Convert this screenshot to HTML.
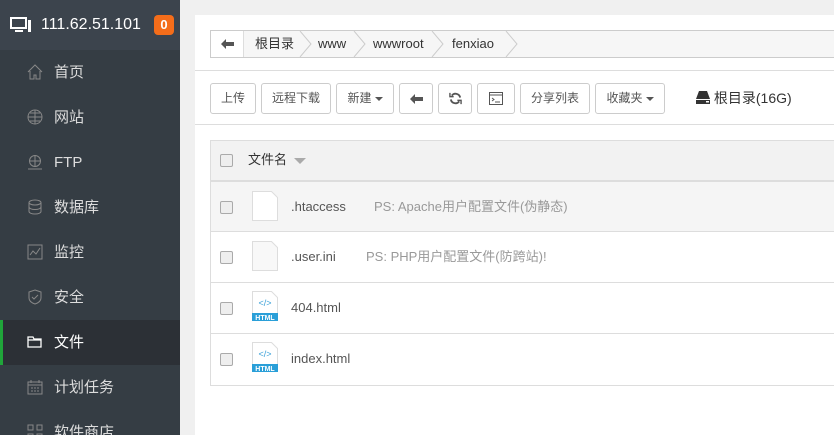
<!DOCTYPE html>
<html><head><meta charset="utf-8"><style>
*{margin:0;padding:0;box-sizing:border-box}
html,body{width:834px;height:435px;overflow:hidden}
body{background:#f0f0f0;font-family:"Liberation Sans","Noto Sans CJK SC",sans-serif;position:relative}
.sb{position:absolute;left:0;top:0;width:180px;height:435px;background:#353d44}
.hd{height:50px;background:#3c444d;position:relative;color:#fff;font-size:16px}
.hd .ip{position:absolute;left:41px;top:0;line-height:50px}
.hd .bd{position:absolute;left:154px;top:15px;width:20px;height:20px;background:#f46d1a;border-radius:4px;font-size:13px;font-weight:bold;text-align:center;line-height:20px}
.it{height:45px;position:relative;color:#ddd;font-size:15px}
.it span{position:absolute;left:54px;top:0;line-height:45px}
.it svg{position:absolute;left:27px;top:14px}
.it.ac{background:#2c3036;color:#fff}
.it.ac:before{content:"";position:absolute;left:0;top:0;width:3px;height:45px;background:#20a53a}
.pn{position:absolute;left:195px;top:15px;width:639px;height:420px;background:#fff}
.bc{position:absolute;left:210px;top:30px;width:630px;height:28px;border:1px solid #ccc;background:#f6f6f6;font-size:13px;color:#333}
.bc .bk{position:absolute;left:0;top:0;width:33px;height:26px;background:#fff;border-right:1px solid #ddd}
.bc span{position:absolute;top:0;line-height:26px}
.ln{position:absolute;left:195px;width:639px;height:1px;background:#ddd}
.btn{position:absolute;top:83px;height:31px;border:1px solid #ccc;border-radius:3px;background:#fff;font-size:12px;color:#555;text-align:center;line-height:29px}
.car{display:inline-block;width:0;height:0;border-left:4px solid transparent;border-right:4px solid transparent;border-top:4px solid #555;vertical-align:middle;margin-left:3px}
.tb{position:absolute;left:210px;top:140px;width:630px;height:246px;border:1px solid #ddd}
.row{position:absolute;left:0;width:630px;border-bottom:1px solid #ddd;font-size:13px;color:#555}
.cb{position:absolute;left:9px;width:13px;height:13px;border:1px solid #aaa;border-radius:2px;background:#eee}
.fi{position:absolute;left:41px;width:26px;height:30px}
.nm{position:absolute;left:80px;top:0;line-height:50px}
.ps{position:absolute;color:#999;top:0;line-height:50px}
</style></head><body>
<div class="sb">
 <div class="hd">
  <svg style="position:absolute;left:10px;top:17px" width="22" height="16" viewBox="0 0 22 16"><rect x="1" y="1" width="15" height="10" fill="none" stroke="#fff" stroke-width="2"/><rect x="5" y="13" width="8" height="2" fill="#fff"/><rect x="18" y="3" width="3" height="12" fill="#fff"/></svg>
  <span class="ip">111.62.51.101</span><span class="bd">0</span>
 </div>
 <div class="it"><svg width="16" height="16" viewBox="0 0 16 16" fill="none" stroke="#888"><path d="M1 8L8 1l7 7M3 7v8h4v-4h2v4h4V7"/></svg><span>首页</span></div>
 <div class="it"><svg width="16" height="16" viewBox="0 0 16 16" fill="none" stroke="#888"><circle cx="8" cy="8" r="7"/><path d="M1 8h14M8 1v14M3 4h10M3 12h10"/></svg><span>网站</span></div>
 <div class="it"><svg width="16" height="16" viewBox="0 0 16 16" fill="none" stroke="#888"><circle cx="8" cy="7" r="5.5"/><path d="M3 7h10M8 2v10M1 15h14"/></svg><span>FTP</span></div>
 <div class="it"><svg width="16" height="16" viewBox="0 0 16 16" fill="none" stroke="#888"><ellipse cx="8" cy="3.5" rx="6" ry="2.5"/><path d="M2 3.5v9c0 1.4 2.7 2.5 6 2.5s6-1.1 6-2.5v-9M2 8c0 1.4 2.7 2.5 6 2.5s6-1.1 6-2.5"/></svg><span>数据库</span></div>
 <div class="it"><svg width="16" height="16" viewBox="0 0 16 16" fill="none" stroke="#888"><rect x="1" y="1" width="14" height="14"/><path d="M3 11l3-4 3 3 4-6"/></svg><span>监控</span></div>
 <div class="it"><svg width="16" height="16" viewBox="0 0 16 16" fill="none" stroke="#888"><path d="M8 1l6 2v6c0 3-3 5-6 6-3-1-6-3-6-6V3z"/><path d="M5 8l2 2 4-4"/></svg><span>安全</span></div>
 <div class="it ac"><svg width="16" height="16" viewBox="0 0 16 16" fill="none" stroke="#fff" stroke-width="1.3"><path d="M1 3h5l1 2h7v8H1z M1 6h13"/></svg><span>文件</span></div>
 <div class="it"><svg width="16" height="16" viewBox="0 0 16 16" fill="none" stroke="#888"><rect x="1" y="3" width="14" height="12"/><path d="M1 6h14M4 1v3M12 1v3M4 9h2M7 9h2M10 9h2M4 12h2M7 12h2M10 12h2"/></svg><span>计划任务</span></div>
 <div class="it"><svg width="16" height="16" viewBox="0 0 16 16" fill="none" stroke="#888"><rect x="1" y="1" width="5" height="5"/><rect x="10" y="1" width="5" height="5"/><rect x="1" y="10" width="5" height="5"/><rect x="10" y="10" width="5" height="5"/></svg><span>软件商店</span></div>
</div>
<div class="pn"></div>
<div class="bc">
 <div class="bk"><svg style="position:absolute;left:10px;top:8px" width="13" height="10" viewBox="0 0 13 10"><path d="M0 5L5 0v3h8v4H5v3z" fill="#555"/></svg></div>
 <svg style="position:absolute;left:0;top:0" width="330" height="26"><g fill="none" stroke="#ccc"><path d="M89 0l11 13-11 13M143 0l11 13-11 13M221 0l11 13-11 13M295 0l11 13-11 13"/></g></svg>
 <span style="left:44px">根目录</span><span style="left:107px">www</span><span style="left:162px">wwwroot</span><span style="left:241px">fenxiao</span>
</div>
<div class="ln" style="top:70px"></div>
<div class="btn" style="left:210px;width:46px">上传</div>
<div class="btn" style="left:261px;width:70px">远程下载</div>
<div class="btn" style="left:336px;width:58px">新建<span class="car"></span></div>
<div class="btn" style="left:399px;width:34px"><svg width="13" height="10" viewBox="0 0 13 10" style="vertical-align:middle"><path d="M0 5L5 0v3h8v4H5v3z" fill="#555"/></svg></div>
<div class="btn" style="left:438px;width:34px"><svg width="13" height="13" viewBox="0 0 14 14" style="vertical-align:middle" fill="none" stroke="#555" stroke-width="2"><path d="M12 6A5 5 0 0 0 3 4M2 8a5 5 0 0 0 9 2"/><path d="M1 1v4h4M13 13V9H9" stroke-width="1.5"/></svg></div>
<div class="btn" style="left:477px;width:38px"><svg width="14" height="13" viewBox="0 0 14 13" style="vertical-align:middle" fill="none" stroke="#555"><rect x="0.5" y="0.5" width="13" height="12"/><path d="M0.5 3h13M3 6l2 1.5L3 9M6 10h5"/></svg></div>
<div class="btn" style="left:520px;width:70px">分享列表</div>
<div class="btn" style="left:595px;width:70px">收藏夹<span class="car"></span></div>
<div style="position:absolute;left:696px;top:83px;line-height:31px;font-size:14px;color:#333"><svg width="14" height="13" viewBox="0 0 14 13" style="vertical-align:-1px"><path d="M3 0h8l3 8H0z" fill="#333"/><rect x="0" y="9" width="14" height="4" fill="#333"/><rect x="10" y="10" width="3" height="1.5" fill="#fff"/></svg> 根目录(16G)</div>
<div class="ln" style="top:124px"></div>
<div class="tb">
 <div class="row" style="top:0;height:40px;background:#f2f2f2"><div class="cb" style="top:13px"></div><span style="position:absolute;left:37px;top:0;line-height:38px;color:#333">文件名 <span class="car" style="border-top-color:#aaa;border-width:6px 6px 0"></span></span></div>
 <div class="row" style="top:40px;height:51px;background:#f5f5f5;border-top:1px solid #ddd"><div class="cb" style="top:19px"></div>
  <svg class="fi" style="top:9px" viewBox="0 0 26 30"><path d="M0.5 0.5h19l6 6v23H0.5z" fill="#fff" stroke="#ddd"/></svg>
  <span class="nm">.htaccess</span><span class="ps" style="left:163px">PS: Apache用户配置文件(伪静态)</span></div>
 <div class="row" style="top:91px;height:51px"><div class="cb" style="top:19px"></div>
  <svg class="fi" style="top:9px" viewBox="0 0 26 30"><path d="M0.5 0.5h19l6 6v23H0.5z" fill="#f8f8f8" stroke="#ddd"/></svg>
  <span class="nm">.user.ini</span><span class="ps" style="left:155px">PS: PHP用户配置文件(防跨站)!</span></div>
 <div class="row" style="top:142px;height:51px"><div class="cb" style="top:19px"></div>
  <svg class="fi" style="top:8px" viewBox="0 0 26 30"><path d="M0.5 0.5h19l6 6v23H0.5z" fill="#fff" stroke="#ddd"/><text x="13" y="15" font-size="9" fill="#3aa0d8" text-anchor="middle" font-family="Liberation Sans">&lt;/&gt;</text><rect x="0" y="22" width="26" height="8" fill="#2a9fd8"/><text x="13" y="29" font-size="7" fill="#fff" text-anchor="middle" font-family="Liberation Sans" font-weight="bold">HTML</text></svg>
  <span class="nm">404.html</span></div>
 <div class="row" style="top:193px;height:51px;border-bottom:none"><div class="cb" style="top:19px"></div>
  <svg class="fi" style="top:8px" viewBox="0 0 26 30"><path d="M0.5 0.5h19l6 6v23H0.5z" fill="#fff" stroke="#ddd"/><text x="13" y="15" font-size="9" fill="#3aa0d8" text-anchor="middle" font-family="Liberation Sans">&lt;/&gt;</text><rect x="0" y="22" width="26" height="8" fill="#2a9fd8"/><text x="13" y="29" font-size="7" fill="#fff" text-anchor="middle" font-family="Liberation Sans" font-weight="bold">HTML</text></svg>
  <span class="nm">index.html</span></div>
</div>
</body></html>
